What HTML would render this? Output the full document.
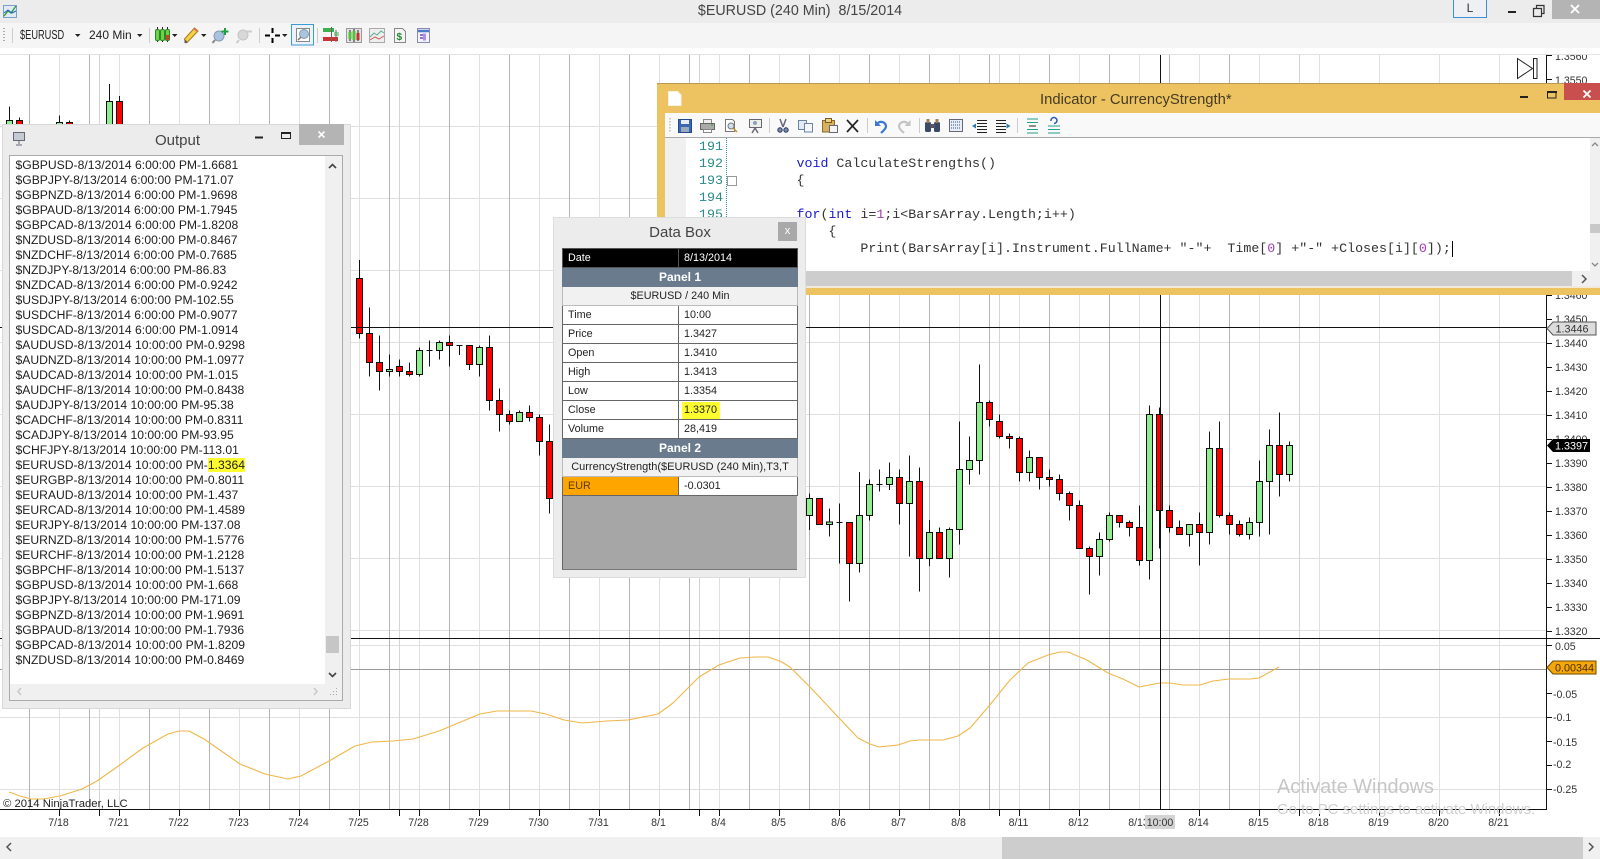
<!DOCTYPE html>
<html><head><meta charset="utf-8"><title>$EURUSD (240 Min) 8/15/2014</title>
<style>
html,body{margin:0;padding:0;background:#fff}
body{position:relative;width:1600px;height:859px;overflow:hidden;font-family:"Liberation Sans",Arial,sans-serif;color:#222}
.a{position:absolute}
svg{position:absolute;left:0;top:0}
svg text{font-family:"Liberation Sans",Arial,sans-serif}
#axis text{font-size:10.6px;fill:#333}
.code{position:absolute;font-family:"Liberation Mono",monospace;font-size:13.3px;line-height:17px;white-space:pre;color:#333}
.b{color:#1a1ad0}.n{color:#a03cb0}
#out{position:absolute;left:15.5px;top:158px;font-size:12.15px;line-height:15px;white-space:pre;color:#1e1e1e}
#out span{background:#fdfd30}
table{border-collapse:collapse;table-layout:fixed;width:235px;font-size:10.8px;color:#222}
td{border:1px solid #666;height:18px;padding:0 0 0 5px;line-height:18px;background:#fff;white-space:nowrap;overflow:hidden}
td.h{background:#6a7b8e;color:#fff;font-weight:bold;font-size:12px;text-align:center;padding:0;border-color:#6a7b8e}
td.s{background:#f1f1f1;text-align:center;padding:0;border-color:#bbb}
</style></head><body>

<svg width="1600" height="859" viewBox="0 0 1600 859">
<path fill="none" stroke="#e0e0e0" d="M0 54.5H1546M0 126.5H1546M0 198.5H1546M0 270.5H1546M0 342.5H1546M0 414.5H1546M0 486.5H1546M0 558.5H1546M0 630.5H1546M0 645.5H1546M0 717.5H1546M0 789.5H1546"/>
<path fill="none" stroke="#e0e0e0" d="M59.5 55V809M119.5 55V809M179.5 55V809M239.5 55V809M299.5 55V809M359.5 55V809M419.5 55V809M479.5 55V809M539.5 55V809M599.5 55V809M659.5 55V809M719.5 55V809M779.5 55V809M839.5 55V809M899.5 55V809M959.5 55V809M1019.5 55V809M1079.5 55V809M1139.5 55V809M1199.5 55V809M1259.5 55V809M1319.5 55V809M1379.5 55V809M1439.5 55V809M1499.5 55V809"/>
<path fill="none" stroke="#b4b4b4" d="M29.5 55V809M89.5 55V809M149.5 55V809M209.5 55V809M269.5 55V809M329.5 55V809M389.5 55V809M449.5 55V809M509.5 55V809M569.5 55V809M629.5 55V809M689.5 55V809M749.5 55V809M809.5 55V809M869.5 55V809M929.5 55V809M989.5 55V809M1049.5 55V809M1109.5 55V809M1169.5 55V809M1229.5 55V809"/>
<path fill="none" stroke="#d4d4d4" d="M99.5 55V809M399.5 55V809M699.5 55V809M999.5 55V809M1299.5 55V809"/>
<path fill="none" stroke="#999" d="M0 669.5H1546"/>

<g transform="translate(.17,0) scale(.33333)" shape-rendering="crispEdges" stroke="#111" stroke-width="3">
<path d="M28 320V380M58 352V380M178 346V380M208 362V380M328 252V380M358 288V380" fill="none"/>
<path fill="#90ee90" d="M19 362h18V390h-18zM169 368h18V390h-18zM319 304h18V390h-18z"/>
<path fill="#f00" d="M49 362h18V390h-18zM199 368h18V390h-18zM349 304h18V390h-18z"/>
</g>
<g transform="translate(350.17,260) scale(.33333)" shape-rendering="crispEdges" stroke="#111" stroke-width="3">
<path fill="none" d="M28 0V236M58 142V350M88 226V392M118 283V350M148 298V350M178 307V350M208 262V350M238 241V320M268 241V298M298 226V320M328 256V285M358 256V330M388 256V350M418 226V452M448 385V515M478 451V494M508 451V484M538 436V484M568 463V587M598 493V760M229 271h18M319 256h18"/>
<path fill="#90ee90" d="M109 328h18V334h-18zM199 271h18V343h-18zM259 247h18V271h-18zM379 262h18V313h-18zM499 457h18V484h-18z"/>
<path fill="#f00" d="M19 55h18V220h-18zM49 220h18V307h-18zM79 307h18V335h-18zM139 319h18V334h-18zM169 334h18V343h-18zM289 247h18V256h-18zM349 256h18V313h-18zM409 262h18V421h-18zM439 421h18V463h-18zM469 463h18V484h-18zM529 457h18V472h-18zM559 472h18V544h-18zM589 544h18V715h-18z"/>
</g>
<g transform="translate(800.17,350) scale(.33333)" shape-rendering="crispEdges" stroke="#111" stroke-width="3">
<path fill="none" d="M28 430V540M58 445V523M88 475V560M118 460V640M148 517V755M178 366V668M208 388V512M238 358V425M268 337V420M298 358V523M328 316V620M358 352V725M388 510V648M418 532V625M448 532V683M478 214V584M508 259V404M538 43V374M568 152V230M598 193V266M628 250V296M658 259V395M688 301V395M718 322V419M748 358V410M778 373V452M808 424V512M838 451V595M868 589V734M898 547V677M928 487V575M958 496V532M988 511V560M1018 466V647M1048 166V689M1078 172V596M1108 466V547M1138 511V553M1168 523V590M1198 487V647M1228 244V584M1258 214V502M1288 487V553M1318 511V559M1348 502V569M1378 331V560M1408 238V554M1438 187V440M1468 274V395M109 517h18M229 403h18"/>
<path fill="#90ee90" d="M19 445h18V496h-18zM79 516h18V523h-18zM169 496h18V640h-18zM199 403h18V496h-18zM259 382h18V403h-18zM319 394h18V460h-18zM379 547h18V625h-18zM439 538h18V625h-18zM469 358h18V538h-18zM499 331h18V358h-18zM529 157h18V331h-18zM679 322h18V367h-18zM889 568h18V619h-18zM919 496h18V568h-18zM1039 193h18V631h-18zM1159 523h18V553h-18zM1219 295h18V547h-18zM1339 517h18V553h-18zM1369 394h18V517h-18zM1399 286h18V394h-18zM1459 286h18V373h-18z"/>
<path fill="#f00" d="M49 445h18V523h-18zM139 517h18V640h-18zM289 382h18V460h-18zM349 394h18V625h-18zM409 547h18V625h-18zM559 157h18V208h-18zM589 214h18V259h-18zM619 259h18V265h-18zM649 265h18V367h-18zM709 322h18V382h-18zM739 382h18V388h-18zM769 388h18V430h-18zM799 430h18V466h-18zM829 466h18V595h-18zM859 595h18V619h-18zM949 496h18V517h-18zM979 517h18V532h-18zM1009 532h18V631h-18zM1069 193h18V481h-18zM1099 481h18V532h-18zM1129 532h18V553h-18zM1189 523h18V547h-18zM1249 295h18V496h-18zM1279 496h18V523h-18zM1309 523h18V553h-18zM1429 286h18V373h-18z"/>
</g>

<polyline fill="none" stroke="#f0b648" stroke-width="1.1" stroke-linejoin="round" points="9,792 20,796 31,799 43,799 60,796 82,789 97,781 117,767 143,748 168,734 179,731 189,731 204,739 240,764 265,774 288,779 301,776 329,761 355,746 372,742 393,741 413,739 439,731 480,714 497,711 531,711 546,714 564,720 582,723 607,721 628,720 658,714 673,703 699,677 719,665 740,658 755,657 768,657 780,661 790,667 810,687 839,718 858,738 870,744 879,747 898,745 910,741 920,740 943,740 958,736 970,728 989,706 1010,680 1028,663 1048,655 1060,652 1068,652 1087,660 1108,673 1123,679 1139,687 1160,683 1170,683 1183,685 1200,685 1213,681 1229,679 1250,679 1259,678 1279,667"/>

<path fill="none" stroke="#111" d="M0 327.5H1547M0 638.5H1600M0 809.5H1546.5M1546.5 55V810M1160.5 55V809"/>

<g id="axis">
<path fill="none" stroke="#111" d="M1547 55.5h5M1547 79.5h5M1547 295.5h5M1547 319.5h5M1547 343.5h5M1547 367.5h5M1547 391.5h5M1547 415.5h5M1547 439.5h5M1547 463.5h5M1547 487.5h5M1547 511.5h5M1547 535.5h5M1547 559.5h5M1547 583.5h5M1547 607.5h5M1547 631.5h5M1547 645.5h5M1547 693.5h5M1547 717.5h5M1547 741.5h5M1547 765.5h5M1547 789.5h5"/>
<path fill="none" stroke="#111" d="M59.5 810v6M99.5 810v6M119.5 810v6M179.5 810v6M239.5 810v6M299.5 810v6M359.5 810v6M399.5 810v6M419.5 810v6M479.5 810v6M539.5 810v6M599.5 810v6M659.5 810v6M699.5 810v6M719.5 810v6M779.5 810v6M839.5 810v6M899.5 810v6M959.5 810v6M999.5 810v6M1019.5 810v6M1079.5 810v6M1199.5 810v6M1259.5 810v6M1299.5 810v6M1319.5 810v6M1379.5 810v6M1439.5 810v6M1499.5 810v6"/>
<text x="1555" y="60">1.3560</text><text x="1555" y="84">1.3550</text><text x="1555" y="299">1.3460</text><text x="1555" y="323">1.3450</text><text x="1555" y="347">1.3440</text><text x="1555" y="371">1.3430</text><text x="1555" y="395">1.3420</text><text x="1555" y="419">1.3410</text><text x="1555" y="443">1.3400</text><text x="1555" y="467">1.3390</text><text x="1555" y="491">1.3380</text><text x="1555" y="515">1.3370</text><text x="1555" y="539">1.3360</text><text x="1555" y="563">1.3350</text><text x="1555" y="587">1.3340</text><text x="1555" y="611">1.3330</text><text x="1555" y="635">1.3320</text>
<text x="1555" y="650">0.05</text><text x="1553" y="698">-0.05</text><text x="1553" y="721">-0.1</text><text x="1553" y="746">-0.15</text><text x="1553" y="768">-0.2</text><text x="1553" y="793">-0.25</text>
<g text-anchor="middle">
<text x="58.5" y="826">7/18</text><text x="118.5" y="826">7/21</text><text x="178.5" y="826">7/22</text><text x="238.5" y="826">7/23</text><text x="298.5" y="826">7/24</text><text x="358.5" y="826">7/25</text><text x="418.5" y="826">7/28</text><text x="478.5" y="826">7/29</text><text x="538.5" y="826">7/30</text><text x="598.5" y="826">7/31</text><text x="658.5" y="826">8/1</text><text x="718.5" y="826">8/4</text><text x="778.5" y="826">8/5</text><text x="838.5" y="826">8/6</text><text x="898.5" y="826">8/7</text><text x="958.5" y="826">8/8</text><text x="1018.5" y="826">8/11</text><text x="1078.5" y="826">8/12</text><text x="1138.5" y="826">8/13</text><text x="1198.5" y="826">8/14</text><text x="1258.5" y="826">8/15</text><text x="1318.5" y="826">8/18</text><text x="1378.5" y="826">8/19</text><text x="1438.5" y="826">8/20</text><text x="1498.5" y="826">8/21</text>
</g>
<rect x="1145" y="815" width="30" height="14" fill="#d4d4d4"/>
<text x="1160" y="826" text-anchor="middle">10:00</text>
<path d="M1547 328.5l6-6.5h43v13h-43z" fill="#dcdcdc" stroke="#555"/>
<text x="1555.5" y="332.5" style="fill:#333;font-size:10.8px">1.3446</text>
<path d="M1547 445.5l6-6.5h37v13h-37z" fill="#000"/>
<text x="1555" y="449.5" style="fill:#fff;font-size:10.8px">1.3397</text>
<path d="M1547 667.5l6-6.5h43v13h-43z" fill="#f5a60a" stroke="#6b4a00"/>
<text x="1555" y="671.5" style="fill:#4a3000;font-size:10.8px">0.00344</text>
<text x="3" y="807" style="font-size:11.3px;fill:#222">© 2014 NinjaTrader, LLC</text>
</g>
<path d="M1517.5 58.5v20l15-10zM1533.5 58.5h3.500v20h-3.500z" fill="#fff" stroke="#222"/>
</svg>

<!-- bottom scrollbar -->
<div class="a" style="left:0;top:837px;width:1600px;height:22px;background:#f0f0f0"></div>
<div class="a" style="left:1002px;top:837px;width:581px;height:22px;background:#cdcdcd"></div>

<!-- watermark -->
<div class="a" style="left:1277px;top:775px;font-size:19.9px;line-height:24px;color:#c6c6c6;white-space:nowrap">Activate Windows</div>
<div class="a" style="left:1277px;top:802px;font-size:14.95px;line-height:16px;color:#cfcfcf;white-space:nowrap">Go to PC settings to activate Windows.</div>

<!-- title + toolbar -->
<div class="a" style="left:0;top:0;width:1600px;height:23px;background:#ececec"></div>
<div class="a" style="left:0;top:23px;width:1600px;height:25px;background:#f5f5f5"></div>
<div class="a" style="left:0;top:48px;width:1600px;height:7px;background:#fff;border-bottom:1px solid #e2e2e2;box-sizing:border-box"></div>
<div class="a" style="left:0;top:3px;width:1600px;text-align:center;font-size:14.300px;line-height:17px;color:#444;white-space:pre">$EURUSD (240 Min)  8/15/2014</div>
<div class="a" style="left:1453px;top:0;width:32px;height:17px;border:1px solid #3d8fdb;border-top:0;background:#eef1f4;text-align:center;font-size:12px;line-height:17px;color:#333">L</div>
<div class="a" style="left:1552px;top:0;width:48px;height:19px;background:#b4b4b4"></div>
<div class="a" style="left:20px;top:27px;font-size:12.5px;line-height:16px;color:#222;transform:scaleX(.74);transform-origin:0 0;white-space:nowrap">$EURUSD</div>
<div class="a" style="left:89px;top:27px;font-size:12px;line-height:16px;color:#222">240 Min</div>

<!-- Indicator window -->
<div class="a" style="left:657px;top:83px;width:943px;height:212px;background:#edc362;border-top:1px solid #b89a50;box-sizing:border-box"></div>
<div class="a" style="left:1040px;top:91px;font-size:14.8px;line-height:18px;color:#443b22;white-space:nowrap">Indicator - CurrencyStrength*</div>
<div class="a" style="left:1564px;top:83px;width:36px;height:17px;background:#c94f4f"></div>
<div class="a" style="left:665px;top:113px;width:935px;height:25px;background:#f9f9f9;border-bottom:1px solid #aaa;box-sizing:border-box"></div>
<div class="a" style="left:665px;top:138px;width:935px;height:133px;background:#fff"></div>
<div class="a" style="left:665px;top:138px;width:21px;height:133px;background:#f0f0f0"></div>
<div class="a" style="left:1590px;top:138px;width:10px;height:133px;background:#f0f0f0"></div>
<div class="a" style="left:1590px;top:224px;width:10px;height:9px;background:#c8c8c8"></div>
<div class="a" style="left:665px;top:271px;width:935px;height:15px;background:#cdcdcd"></div>
<div class="a" style="left:1572px;top:271px;width:28px;height:15px;background:#f0f0f0"></div>
<div class="a" style="left:657px;top:286px;width:943px;height:2px;background:#f2ead8"></div>
<div class="a" style="left:726px;top:138px;width:0;height:133px;border-left:1px dotted #2b91af"></div>
<div class="code" style="left:699px;top:138px;color:#2b8a8a">191
192
193
194
195</div>
<div class="code" style="left:796.500px;top:155px;"><span class="b">void</span> CalculateStrengths()
{

<span class="b">for</span>(<span class="b">int</span> i=<span class="n">1</span>;i&lt;BarsArray.Length;i++)
    {
        Print(BarsArray[i].Instrument.FullName+ "-"+  Time[<span class="n">0</span>] +"-" +Closes[i][<span class="n">0</span>]);</div>
<div class="a" style="left:1452px;top:241px;width:1px;height:16px;background:#000"></div>
<div class="a" style="left:727px;top:176px;width:8px;height:8px;border:1px solid #999;background:#fff"></div>

<!-- Output window -->
<div class="a" style="left:2px;top:124px;width:349px;height:585px;background:#ececec;border:1px solid #d8d8d8;box-sizing:border-box"></div>
<div class="a" style="left:299px;top:124px;width:45px;height:21px;background:#b4b4b4"></div>
<div class="a" style="left:3px;top:132px;width:349px;text-align:center;font-size:15px;line-height:18px;color:#444;box-sizing:border-box">Output</div>
<div class="a" style="left:9px;top:155px;width:334px;height:546px;background:#fff;border:1px solid #aaa;box-sizing:border-box"></div>
<div class="a" style="left:325px;top:156px;width:17px;height:544px;background:#f0f0f0"></div>
<div class="a" style="left:10px;top:684px;width:332px;height:16px;background:#f0f0f0"></div>
<div class="a" style="left:326px;top:636px;width:13px;height:17px;background:#c6c6c6"></div>
<div id="out">$GBPUSD-8/13/2014 6:00:00 PM-1.6681
$GBPJPY-8/13/2014 6:00:00 PM-171.07
$GBPNZD-8/13/2014 6:00:00 PM-1.9698
$GBPAUD-8/13/2014 6:00:00 PM-1.7945
$GBPCAD-8/13/2014 6:00:00 PM-1.8208
$NZDUSD-8/13/2014 6:00:00 PM-0.8467
$NZDCHF-8/13/2014 6:00:00 PM-0.7685
$NZDJPY-8/13/2014 6:00:00 PM-86.83
$NZDCAD-8/13/2014 6:00:00 PM-0.9242
$USDJPY-8/13/2014 6:00:00 PM-102.55
$USDCHF-8/13/2014 6:00:00 PM-0.9077
$USDCAD-8/13/2014 6:00:00 PM-1.0914
$AUDUSD-8/13/2014 10:00:00 PM-0.9298
$AUDNZD-8/13/2014 10:00:00 PM-1.0977
$AUDCAD-8/13/2014 10:00:00 PM-1.015
$AUDCHF-8/13/2014 10:00:00 PM-0.8438
$AUDJPY-8/13/2014 10:00:00 PM-95.38
$CADCHF-8/13/2014 10:00:00 PM-0.8311
$CADJPY-8/13/2014 10:00:00 PM-93.95
$CHFJPY-8/13/2014 10:00:00 PM-113.01
$EURUSD-8/13/2014 10:00:00 PM-<span>1.3364</span>
$EURGBP-8/13/2014 10:00:00 PM-0.8011
$EURAUD-8/13/2014 10:00:00 PM-1.437
$EURCAD-8/13/2014 10:00:00 PM-1.4589
$EURJPY-8/13/2014 10:00:00 PM-137.08
$EURNZD-8/13/2014 10:00:00 PM-1.5776
$EURCHF-8/13/2014 10:00:00 PM-1.2128
$GBPCHF-8/13/2014 10:00:00 PM-1.5137
$GBPUSD-8/13/2014 10:00:00 PM-1.668
$GBPJPY-8/13/2014 10:00:00 PM-171.09
$GBPNZD-8/13/2014 10:00:00 PM-1.9691
$GBPAUD-8/13/2014 10:00:00 PM-1.7936
$GBPCAD-8/13/2014 10:00:00 PM-1.8209
$NZDUSD-8/13/2014 10:00:00 PM-0.8469</div>

<!-- Data box -->
<div class="a" style="left:553px;top:217px;width:253px;height:361px;background:#ececec;border:1px solid #dcdcdc;box-sizing:border-box"></div>
<div class="a" style="left:553px;top:224px;width:253px;padding-left:1px;text-align:center;font-size:15px;line-height:18px;color:#444;box-sizing:border-box">Data Box</div>
<div class="a" style="left:778px;top:222px;width:19px;height:19px;background:#a9a9a9;color:#fff;font-size:11px;line-height:18px;text-align:center">x</div>
<div class="a" style="left:562px;top:248px;width:235px;height:322px;background:#a6a6a6;border-bottom:1px solid #777;border-left:1px solid #666;box-sizing:border-box"></div>
<table class="a" style="left:562px;top:248px">
<colgroup><col style="width:116px"><col style="width:119px"></colgroup>
<tr><td style="background:#000;color:#fff;border-color:#555">Date</td><td style="background:#000;color:#fff;border-color:#555">8/13/2014</td></tr>
<tr><td class="h" colspan="2">Panel 1</td></tr>
<tr><td class="s" colspan="2">$EURUSD / 240 Min</td></tr>
<tr><td>Time</td><td>10:00</td></tr>
<tr><td>Price</td><td>1.3427</td></tr>
<tr><td>Open</td><td>1.3410</td></tr>
<tr><td>High</td><td>1.3413</td></tr>
<tr><td>Low</td><td>1.3354</td></tr>
<tr><td>Close</td><td><span style="background:#fdfd30;padding:2px 3px 3px 2px;margin-left:-2px">1.3370</span></td></tr>
<tr><td>Volume</td><td>28,419</td></tr>
<tr><td class="h" colspan="2">Panel 2</td></tr>
<tr><td class="s" colspan="2" style="font-size:11px">CurrencyStrength($EURUSD (240 Min),T3,T</td></tr>
<tr><td style="background:#ffa500;color:#5a3a00">EUR</td><td>-0.0301</td></tr>
</table>

<!-- icons overlay -->
<svg width="1600" height="859" viewBox="0 0 1600 859" fill="none">
<!-- app icon -->
<rect x="3.500" y="5.500" width="13" height="12" fill="#dfeaf6" stroke="#7aa0c8"/>
<path d="M4 16l4-5 3 2 5-7" stroke="#2a9a3a" stroke-width="1.300"/><path d="M4 13l4-3 4 3 4-2" stroke="#2a60c8"/>
<!-- window buttons -->
<path d="M1508 12h8" stroke="#222" stroke-width="2"/>
<path d="M1533.500 16.500v-8h8v8zM1536.500 8v-2.500h7.500v8h-2.500" stroke="#333" stroke-width="1.200"/>
<path d="M1571 5l8 8M1579 5l-8 8" stroke="#fff" stroke-width="1.800"/>
<!-- toolbar -->
<path d="M4 28v1M4 31v1M4 34v1M4 37v1M4 40v1" stroke="#aaa" stroke-width="2"/>
<path d="M12.500 28v15M149.500 28v15M259.500 28v15M317.500 28v15" stroke="#ccc"/>
<path d="M75 34h5.500l-2.750 3zM137 34h5.500l-2.750 3zM172 34h5.500l-2.750 3zM201 34h5.500l-2.750 3zM282 34h5.500l-2.750 3z" fill="#222"/>
<path d="M157.500 27v15M162.500 27v15M167.500 27v15" stroke="#222"/>
<rect x="155.500" y="29.500" width="4" height="11" rx="1.500" fill="#6fd04a" stroke="#2a8a20"/><rect x="160.500" y="29.500" width="4" height="11" rx="1.500" fill="#6fd04a" stroke="#2a8a20"/><rect x="165.500" y="29.500" width="4" height="11" rx="1.500" fill="#6fd04a" stroke="#2a8a20"/><rect x="166" y="35" width="3" height="5" fill="#d04030"/>
<path d="M186 43l-1.500-4 10-11 3.500 3-10 10.500z" fill="#f5d040" stroke="#a87a20"/><path d="M184.500 39l3.500 3.500-3.500.5z" fill="#555"/><path d="M194 28.500l3.500 3" stroke="#e07050" stroke-width="1.500"/>
<circle cx="219" cy="36" r="5" fill="#a8c4e0" stroke="#8a9aac"/><path d="M215 40l-2.500 3" stroke="#888" stroke-width="2"/><path d="M225 28v7M221.500 31.500h7" stroke="#1aa040" stroke-width="2"/>
<circle cx="243" cy="35" r="5" fill="#d8d8d8" stroke="#c4c4c4"/><path d="M239 40l-2.500 3" stroke="#ccc" stroke-width="2"/><path d="M247 31.500h5" stroke="#ccc" stroke-width="2"/>
<path d="M272.500 28v5M272.500 38v5M265 35.500h5M275 35.500h5" stroke="#000" stroke-width="2"/>
<rect x="291.500" y="24.500" width="22" height="20.500" fill="#eaf3fb" stroke="#3d9ad8"/>
<rect x="296.500" y="28.500" width="13" height="13" fill="#fff" stroke="#888"/>
<circle cx="304" cy="34" r="4.500" fill="#a8c4e0" stroke="#8a9aac"/><path d="M301 37l-3 3" stroke="#777" stroke-width="1.500"/>
<path d="M323 28h11v4h-11z" fill="#3cb04a"/><path d="M323 37h15v4h-15z" fill="#d03030"/><path d="M331.500 27v15M336 30v12" stroke="#666"/><path d="M334 33h5M334 35h5" stroke="#3cb04a"/>
<rect x="346.500" y="28.500" width="15" height="14" fill="#e4e4e4" stroke="#999"/><path d="M350 30v11M354 29v13M358 30v11" stroke="#222"/><rect x="348.500" y="32" width="3" height="7" fill="#56c040"/><rect x="352.500" y="31" width="3" height="9" fill="#56c040"/><rect x="356.500" y="33" width="3" height="7" fill="#c83030"/>
<rect x="369.500" y="28.500" width="15" height="14" fill="#eee" stroke="#aaa"/><path d="M370 37l4-4 3 2 4-4 3 2" stroke="#58b090"/><path d="M370 40l5-3 4 2 5-3" stroke="#d06060"/>
<path d="M394.500 28.500h8l3 3v11h-11z" fill="#f4f4f4" stroke="#888"/><text x="396.500" y="40" font-size="10" font-weight="bold" fill="#1a8a2a">$</text>
<rect x="417.500" y="28.500" width="12" height="14" fill="#f2f2fa" stroke="#8a8ab0"/><path d="M418 31h11" stroke="#4a7ac8" stroke-width="2.500"/><path d="M420 35h3M420 38h3" stroke="#9070d0" stroke-width="2"/><path d="M424.500 33.500v7" stroke="#b090e0" stroke-width="3"/>
<!-- output window buttons -->
<rect x="13.500" y="132.500" width="11" height="8" fill="#c4cbd2" stroke="#667"/><path d="M19 141v3M16 145h6" stroke="#667"/>
<path d="M255 137.500h8" stroke="#222" stroke-width="2"/>
<rect x="281.500" y="132.500" width="9" height="6" stroke="#222"/><path d="M281 133h10" stroke="#222" stroke-width="2"/>
<path d="M318.500 131.500l6 6M324.500 131.500l-6 6" stroke="#fff" stroke-width="1.600"/>
<path d="M329 168l3.500-3.500 3.500 3.500" stroke="#444" stroke-width="1.600"/>
<path d="M329 673l3.500 3.500 3.500-3.500" stroke="#444" stroke-width="1.600"/>
<path d="M21 688l-3 3.500 3 3.500M314 688l3 3.500-3 3.500" stroke="#c8c8c8" stroke-width="1.500"/>
<path d="M336.500 688v1M333.500 691v1M336.500 691v1M330.500 694v1M333.500 694v1M336.500 694v1" stroke="#aaa"/>
<!-- bottom scrollbar arrows -->
<path d="M11 843l-4 4 4 4" stroke="#555" stroke-width="1.500"/>
<path d="M1589 843l4 4-4 4" stroke="#555" stroke-width="1.500"/>
<!-- indicator window -->
<path d="M668.500 91.500h9l3.500 3.500v10.500h-12.500z" fill="#fff" stroke="#f4f0e4"/>
<path d="M1520 97h8" stroke="#222" stroke-width="2"/>
<rect x="1547.500" y="91.500" width="8.500" height="6.500" stroke="#222"/><path d="M1547 92h10" stroke="#222" stroke-width="2"/>
<path d="M1583.500 90.500l7 7M1590.500 90.500l-7 7" stroke="#fff" stroke-width="1.800"/>
<path d="M670 118v15" stroke="#bbb" stroke-dasharray="1.500 1.500" stroke-width="1.500"/>
<path d="M769.500 118v15M867.500 118v15M919.500 118v15M1017.500 118v15" stroke="#ccc"/>
<rect x="678.500" y="119.500" width="13" height="13" fill="#3a66b4" stroke="#24488c"/><rect x="681" y="120" width="8" height="4" fill="#e8eef8"/><rect x="681" y="127" width="8" height="5" fill="#9ab"/>
<path d="M703.500 119.500h8v4h-8z" fill="#eee" stroke="#888"/><rect x="700.500" y="123.500" width="14" height="6" fill="#aaa" stroke="#666"/><path d="M703.500 129.500h8v3h-8z" fill="#fff" stroke="#888"/><path d="M711 125h2" stroke="#2a2"/>
<path d="M725.500 119.500h7l2 2v10h-9z" fill="#fff" stroke="#777"/><circle cx="731" cy="126" r="3" fill="#d0e0f0" stroke="#777"/><path d="M733 128l4 4" stroke="#c09030" stroke-width="1.500"/>
<path d="M749.500 119.500h12v8h-12z" fill="#eef0e8" stroke="#667"/><path d="M755.500 127v2M752 133l3-5 3 5" stroke="#667" stroke-width="1.400"/><circle cx="755" cy="123" r="2" fill="#8aa0c0"/>
<path d="M780 119l3 8M786 119l-3 8" stroke="#667" stroke-width="1.500"/><circle cx="780" cy="130" r="2.200" fill="#7a8aa8" stroke="#2a3a60"/><circle cx="786" cy="130" r="2.200" fill="#7a8aa8" stroke="#2a3a60"/>
<rect x="798.500" y="120.500" width="8" height="9" fill="#e4eaf4" stroke="#6a82a8"/><rect x="804.500" y="123.500" width="8" height="8.500" fill="#f4f6fa" stroke="#6a82a8"/>
<rect x="822.500" y="120.500" width="12" height="11.500" fill="#d8b060" stroke="#8a6a30"/><rect x="825.500" y="118.500" width="6" height="4" fill="#e8d080" stroke="#7a5a20"/><rect x="829.500" y="125.500" width="8" height="7" fill="#f4f4f4" stroke="#667"/>
<path d="M847 120l11 12M858 120l-11 12" stroke="#222" stroke-width="1.700"/>
<path d="M877 124a5 5 0 0 1 9 2c0 3-3 5-5 7" stroke="#3a78d4" stroke-width="2.200"/><path d="M875 120v6h6z" fill="#3a78d4"/>
<path d="M908 124a5 5 0 0 0-9 2c0 3 3 5 5 7" stroke="#c4c4c4" stroke-width="2.200"/><path d="M910.500 120v6h-6z" fill="#c4c4c4"/>
<rect x="925" y="122" width="6" height="10" rx="1.500" fill="#3a4a66"/><rect x="934" y="122" width="6" height="10" rx="1.500" fill="#3a4a66"/><rect x="926.500" y="119" width="3" height="4" fill="#a08050"/><rect x="935.500" y="119" width="3" height="4" fill="#a08050"/><rect x="930" y="124" width="5" height="4" fill="#556"/>
<rect x="949.500" y="119.500" width="13" height="12" fill="#e8eef8" stroke="#667"/><path d="M951 122h10M951 125h10M951 128h10" stroke="#2a4a8a" stroke-dasharray="1 1"/>
<path d="M977 120.500h10M977 123.500h10M977 126.500h10M977 129.500h10M977 132.500h10" stroke="#222"/><path d="M976 123.500l-4 2.500 4 2.500z" fill="#2a7ab4"/>
<path d="M996 120.500h10M996 123.500h10M996 126.500h10M996 129.500h10M996 132.500h10" stroke="#222"/><path d="M1006.500 123.500l4 2.500-4 2.500z" fill="#2a7ab4"/>
<path d="M1027 119h11M1027 133h11" stroke="#22a08a"/><path d="M1027 122.500h11M1027 129.500h11" stroke="#22a08a"/><path d="M1029 126h7" stroke="#222"/>
<path d="M1048 126h12M1048 129.500h12M1048 133h12" stroke="#22a08a"/><path d="M1051 121a3 3 0 1 1 3 2.500" stroke="#2a5ab4" stroke-width="1.500"/>
<path d="M1582 275l4 4-4 4" stroke="#555" stroke-width="1.500"/>
<path d="M1592 146l3-3 3 3M1592 263l3 3 3-3" stroke="#888" stroke-width="1.300"/>
</svg>
</body></html>
